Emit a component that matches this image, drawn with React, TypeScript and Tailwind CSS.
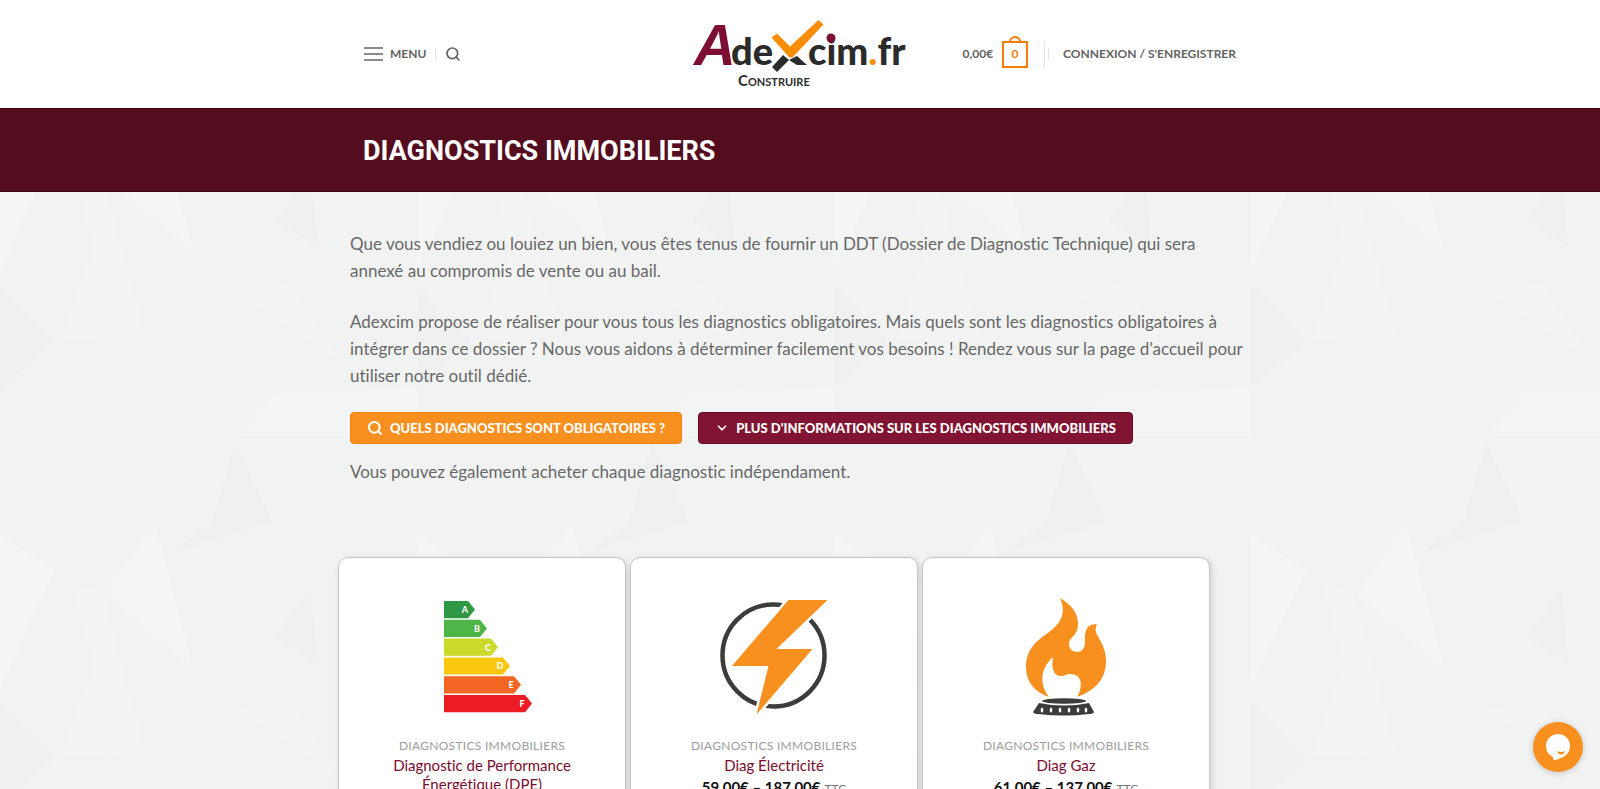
import type { ReactNode } from 'react';
import { Search, ChevronDown } from 'lucide-react';

type Product = { title: string; price?: string; art: ReactNode };

const GRADES = [
  { letter: 'A', width: 31, color: '#2f9844' },
  { letter: 'B', width: 43, color: '#4fb548' },
  { letter: 'C', width: 54, color: '#c9da2a' },
  { letter: 'D', width: 66, color: '#f9c80e' },
  { letter: 'E', width: 77, color: '#f26522' },
  { letter: 'F', width: 88, color: '#ed1c24' },
];

function Logo() {
  return (
    <svg width="240" height="108" viewBox="0 0 240 108" role="img" aria-label="Adexcim.fr Construire">
      <text x="14" y="65" fontSize="58" fontWeight="700" fontStyle="italic" fontFamily="'Liberation Sans Narrow', 'Liberation Sans', sans-serif" fill="#7d0f35">A</text>
      <g fontFamily="Lato, sans-serif" fontWeight="900" fontSize="38" fill="#2b2b2b">
        <text x="51" y="65">de</text>
        <text x="128" y="65">cim<tspan fill="#f98e06">.</tspan>fr</text>
      </g>
      <circle cx="151" cy="38" r="4.500" fill="#7d0f35" />
      <path d="M92 67 103 55 109 60 97 72Z" fill="#2b2b2b" />
      <path d="M109 60 117 56 127 65H117Z" fill="#2b2b2b" />
      <path d="M91.500 37.500 97 33.500 110 46.500 138.500 20 143.500 24.500 112.500 57.500H109.500Z" fill="#f98e06" />
      <g fontFamily="Lato, sans-serif" fontWeight="700" fill="#2b2b2b">
        <text x="58" y="86" fontSize="15">C<tspan fontSize="11">ONSTRUIRE</tspan></text>
      </g>
    </svg>
  );
}

function EnergyArt() {
  return (
    <svg width="102" height="112" viewBox="-13 0 102 112" aria-hidden="true">
      {GRADES.map((g, i) => (
        <g key={g.letter} transform={`translate(0 ${i * 18.8})`}>
          <path d={`M0 0H${g.width - 7}L${g.width} 8.600 ${g.width - 7} 17.200H0Z`} fill={g.color} />
          <text x={g.width - 10} y="12" textAnchor="middle" fontSize="9" fontWeight="900" fontFamily="Lato, sans-serif" fill="#fff">{g.letter}</text>
        </g>
      ))}
    </svg>
  );
}

function BoltArt() {
  return (
    <svg width="108" height="116" viewBox="0 0 108 116" aria-hidden="true">
      <circle cx="53.500" cy="56.500" r="51" fill="none" stroke="#3c3c3c" strokeWidth="4.500" />
      <path d="M68.500 1H107.500L56.500 50H92.500L36.500 115.500 48.500 67H12Z" fill="#f7901e" stroke="#fff" strokeWidth="5" />
      <path d="M68.500 1H107.500L56.500 50H92.500L36.500 115.500 48.500 67H12Z" fill="#f7901e" />
    </svg>
  );
}

function FlameArt() {
  return (
    <svg width="82" height="119" viewBox="0 0 82 119" aria-hidden="true">
      <path
        d="M35 0C48 8 53 16 53 26C53 38 44 39 44 46C44 51 48 54 52 54C57 54 60 50 60 44C60 37 59 26 72 26C66 37 81 42 81 63C81 82 69 93 52 99C58 89 58 76 45 76C41 76 40 78 36 78C29 78 26 71 28 59C18 68 12 83 24 99C9 94 1 83 1 69C1 52 11 43 24 34C35 26 42 16 35 0Z"
        fill="#f7901e"
      />
      <ellipse cx="39" cy="103" rx="22" ry="2.800" fill="#3c3c3c" />
      <path d="M14 105Q39 110 64 105L69 114Q68 116 64 116Q39 119 13 116Q9 116 8 114Z" fill="#3c3c3c" />
      {[17, 26, 35, 44, 53, 61].map(x => <ellipse key={x} cx={x} cy="112" rx="1.300" ry="2.600" fill="#fff" />)}
    </svg>
  );
}

const PRODUCTS: Product[] = [
  { title: 'Diagnostic de Performance Énergétique (DPE)', art: <EnergyArt /> },
  { title: 'Diag Électricité', price: '59,00€ – 187,00€', art: <BoltArt /> },
  { title: 'Diag Gaz', price: '61,00€ – 137,00€', art: <FlameArt /> },
];

function Backdrop() {
  return (
    <svg className="absolute inset-0 -z-10 h-full w-full" aria-hidden="true">
      <defs>
        <pattern id="facets" y="285" width="417" height="417" patternUnits="userSpaceOnUse">
          <path d="M0 250 55 285 0 402ZM155 239 193 382 105 309ZM275 108 417 102V151H238Z" fill="#f3f4f4" />
          <path d="M70 296 103 309 131 417H78L95 382ZM131 0 145 50 62 54 80 0ZM235 6 290 0 340 75Z" fill="#f3f3f3" />
          <path d="M0 0 55 56 0 105ZM235 158 273 237 170 268 212 237ZM310 303 318 379 275 353Z" fill="#eff1f0" />
        </pattern>
      </defs>
      <rect width="100%" height="100%" fill="url(#facets)" />
    </svg>
  );
}

function ProductCard({ title, price, art }: Product) {
  return (
    <li className="flex flex-col rounded-[10px] border border-[#c4c4c4] bg-white px-10 pb-10 text-center shadow-[2px_2px_6px_rgba(0,0,0,0.15)]">
      <div className="flex h-[180px] items-center justify-center pt-[18px]">{art}</div>
      <p className="text-xs leading-4 tracking-wide text-[#9c9c9c] uppercase">Diagnostics immobiliers</p>
      <a href="#produit" className="mt-0.5 text-[15px] leading-[19px] text-[#7a0c2e]">{title}</a>
      {price && (
        <p className="mt-0.5 text-[15px] leading-5 text-[#777]">
          <span className="font-bold text-[#111]">{price}</span> <small className="text-xs">TTC</small>
        </p>
      )}
    </li>
  );
}

export default function App() {
  return (
    <div className="relative isolate h-screen overflow-hidden bg-[#f1f3f2] font-[Lato,sans-serif] text-[#686868] [font-variant-ligatures:none]">
      <Backdrop />

      <header className="bg-white">
        <div className="mx-auto grid h-[108px] max-w-[872px] grid-cols-[1fr_240px_1fr] items-center text-xs font-bold text-[#626262]">
          <div className="flex items-center">
            <button type="button" className="flex items-center gap-[7px] uppercase">
              <svg width="19" height="14" viewBox="0 0 19 14" aria-hidden="true">
                <path d="M0 1H19M0 7H19M0 13H19" stroke="#666" strokeWidth="1.500" />
              </svg>
              Menu
            </button>
            <span className="mx-[9px] h-3 w-px bg-[#e2e2e2]" />
            <button type="button" aria-label="Rechercher">
              <Search size={16} strokeWidth={2.5} />
            </button>
          </div>

          <a href="#accueil"><Logo /></a>

          <div className="flex items-center justify-end">
            <a href="#panier" className="flex items-center gap-[9px]">
              0,00€
              <span className="relative flex h-[27px] w-[26px] items-center justify-center border-2 border-[#f57c0a] text-[#f57c0a]">
                <span className="absolute -top-[7px] h-[6px] w-3 rounded-t-full border-2 border-b-0 border-[#f57c0a]" />
                0
              </span>
            </a>
            <span className="ml-4 h-[26px] w-px bg-[#e5e5e5]" />
            <span className="mr-[14px] ml-[3px] h-3 w-px bg-[#e5e5e5]" />
            <a href="#connexion" className="whitespace-nowrap uppercase">Connexion / S'enregistrer</a>
          </div>
        </div>
      </header>

      <section className="border-y border-[#3a0410] bg-[#530d1f]">
        <h1 className="mx-auto max-w-[874px] pt-[25px] pb-[23px] font-[Roboto,sans-serif] text-[27px] leading-[34px] font-bold text-white uppercase">
          Diagnostics immobiliers
        </h1>
      </section>

      <main className="mx-auto max-w-[900px] pt-[38px] text-[17px] leading-[27px]">
        <p className="mb-6">
          Que vous vendiez ou louiez un bien, vous êtes tenus de fournir un DDT (Dossier de Diagnostic Technique) qui sera annexé au compromis de vente ou au bail.
        </p>
        <p className="mb-[23px]">
          Adexcim propose de réaliser pour vous tous les diagnostics obligatoires. Mais quels sont les diagnostics obligatoires à intégrer dans ce dossier ? Nous vous aidons à déterminer facilement vos besoins ! Rendez vous sur la page d’accueil pour utiliser notre outil dédié.
        </p>
        <div className="mb-[14px] flex gap-4 text-[13px] font-black text-white uppercase">
          <a href="#obligatoires" className="flex h-8 items-center gap-[7px] rounded border border-[#f08010] bg-[#f7901e] px-4">
            <Search size={16} strokeWidth={3} />
            Quels diagnostics sont obligatoires ?
          </a>
          <a href="#informations" className="flex h-8 items-center gap-[7px] rounded border border-[#6d0a25] bg-[#821433] px-4">
            <ChevronDown size={14} strokeWidth={3} />
            Plus d'informations sur les diagnostics immobiliers
          </a>
        </div>
        <p>Vous pouvez également acheter chaque diagnostic indépendament.</p>

        <ul className="mt-[72px] -ml-3 grid max-w-[872px] grid-cols-3 gap-1">
          {PRODUCTS.map(p => <ProductCard key={p.title} {...p} />)}
        </ul>
      </main>

      <button type="button" aria-label="Ouvrir le chat" className="fixed right-[17px] bottom-[17px] flex size-[50px] items-center justify-center rounded-full bg-[#f7901e] shadow-[0_1px_6px_rgba(0,0,0,0.2)]">
        <svg width="26" height="28" viewBox="0 0 26 28" aria-hidden="true">
          <circle cx="13" cy="13" r="12" fill="#fff" />
          <path d="M7 22 9 27.500Q18 25 23 19Z" fill="#fff" />
          <path d="M12 18Q16 20 20 18Q19 21.500 16 21.500Q13 21.500 12 18Z" fill="#f7901e" />
        </svg>
      </button>
    </div>
  );
}
